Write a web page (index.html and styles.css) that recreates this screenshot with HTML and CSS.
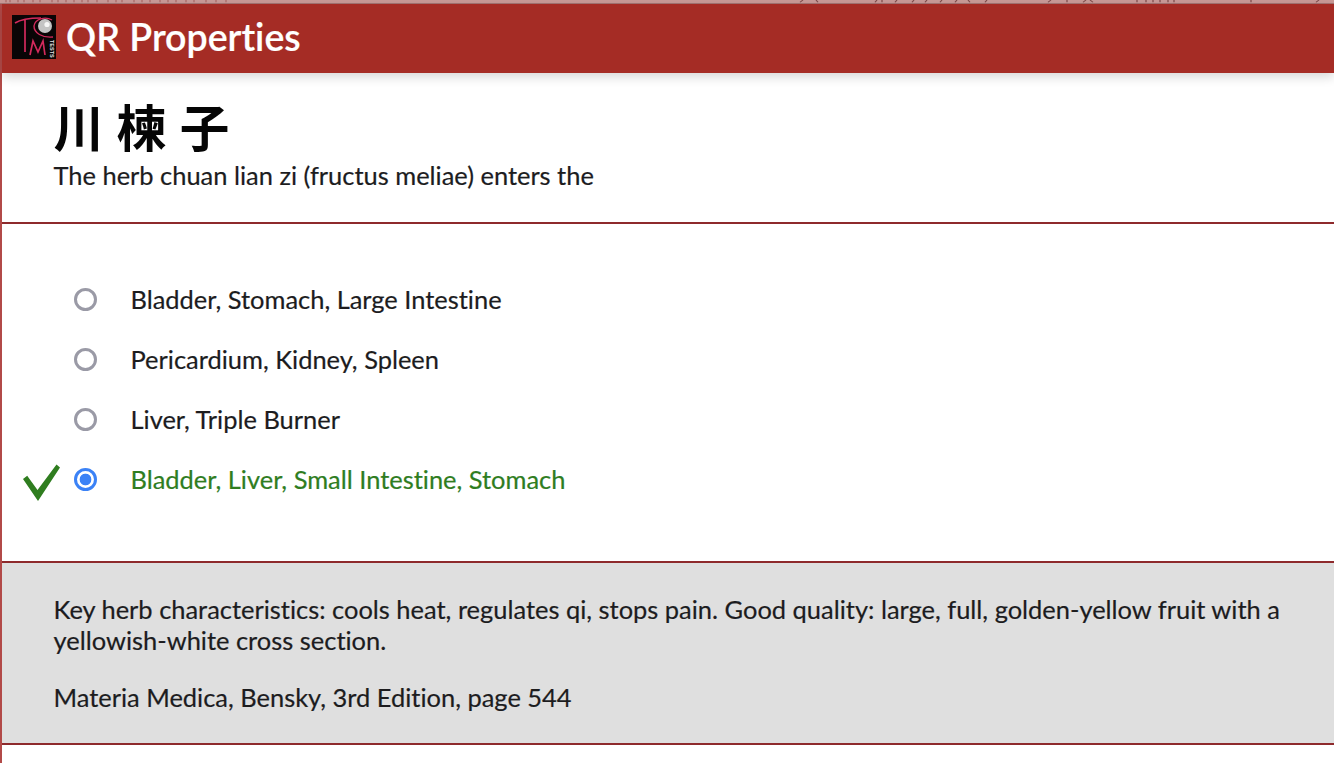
FILE: index.html
```html
<!DOCTYPE html>
<html lang="en">
<head>
<meta charset="utf-8">
<title>QR Properties</title>
<link rel="stylesheet" href="styles.css">
</head>
<body>
<div class="page">
  <svg class="peek" viewBox="0 0 1334 4" preserveAspectRatio="none" aria-hidden="true">
    <path class="peek-faint" d="M6 0V3M10 0V3M18 0V3M24 0V3M33 0V3M40 0V3M52 0V3M58 0V3M66 0V3M74 0V3M82 0V3M88 0V3M97 0V3M108 0V3M116 0V3M122 0V3M134 0V3M142 0V3M150 0V3M160 0V3M168 0V3M176 0V3M186 0V3M194 0V3M206 0V3M216 0V3M226 0V3"/>
    <path class="peek-dark" d="M800 3L803 0M816 0L818 3M875 3L877 0M882 0V3M895 3L897 0M912 3L914 0M925 3L927 0M940 3L942 0M955 3L957 0M968 0L970 3M985 3L987 0M1048 3L1051 0M1067 0V3M1083 3L1086 0M1090 0L1093 3M1137 0V3M1146 0V3M1153 0V3M1160 0V3M1168 0V3M1174 0V3M1251 0V3M1316 3L1319 0"/>
  </svg>
  <header class="bar">
    <svg class="logo" viewBox="0 0 44 44" aria-hidden="true">
      <rect width="44" height="44" fill="#0a0506"/>
      <circle cx="33" cy="11" r="7" fill="#c4c4c4"/>
      <circle cx="35" cy="9.5" r="2.6" fill="#f6f6f6"/>
      <path d="M3 8C9 4 20 3 29 3M13 4V37" fill="none" stroke="#d32a5c" stroke-width="1.7"/>
      <path d="M40 5C33 1 23 4 22 11C22 18 30 23 41 22" fill="none" stroke="#d32a5c" stroke-width="1.4"/>
      <path d="M18 40L21 26L26 37L31 26L33 40" fill="none" stroke="#d32a5c" stroke-width="1.7"/>
      <text x="0" y="0" class="logo-text" transform="translate(37.5 25) rotate(90)">TESTS</text>
    </svg>
    <h1 class="title">QR Properties</h1>
  </header>
  <section class="question">
    <div class="herb">川楝子</div>
    <p class="prompt">The herb chuan lian zi (fructus meliae) enters the</p>
  </section>
  <section class="answers">
    <label class="answer"><span class="mark"></span><input type="radio" name="q" class="radio"><span>Bladder, Stomach, Large Intestine</span></label>
    <label class="answer"><span class="mark"></span><input type="radio" name="q" class="radio"><span>Pericardium, Kidney, Spleen</span></label>
    <label class="answer"><span class="mark"></span><input type="radio" name="q" class="radio"><span>Liver, Triple Burner</span></label>
    <label class="answer correct"><span class="mark"><svg class="check" viewBox="0 0 38 38" aria-hidden="true"><path d="M1 15L5.200 11.800L15.500 26L34.500 0.500L38 3.500L16 37Z" fill="#2f7d1f"/></svg></span><input type="radio" name="q" class="radio" checked><span>Bladder, Liver, Small Intestine, Stomach</span></label>
  </section>
  <section class="notes">
    <p class="note">Key herb characteristics: cools heat, regulates qi, stops pain. Good quality: large, full, golden-yellow fruit with a yellowish-white cross section.</p>
    <p class="note">Materia Medica, Bensky, 3rd Edition, page 544</p>
  </section>
</div>
</body>
</html>
```
FILE: styles.css
```css
html, body {
  margin: 0;
  height: 100%;
  background: #fff;
  overflow: hidden;
}
.page {
  min-height: 763px;
  border-left: 2px solid #b24a48;
  box-sizing: border-box;
  font-family: Lato, "Noto Sans", sans-serif;
  font-size: 25.45px;
  font-variant-ligatures: none;
  color: #1c1c1e;
  -webkit-text-stroke: 0.2px currentColor;
}
.peek {
  display: block;
  width: calc(100% + 2px);
  height: 4px;
  margin-left: -2px;
  background: #c99a97;
  border-bottom: 1px solid #a47472;
  box-sizing: border-box;
}
.peek-faint {
  stroke: #b67c79;
  stroke-width: 2;
  fill: none;
}
.peek-dark {
  stroke: #7d4a49;
  stroke-width: 1.2;
  fill: none;
}
.bar {
  height: 69px;
  background: #a52c25;
  display: flex;
  align-items: center;
  gap: 10px;
  padding-left: 10px;
  box-shadow: 0 4px 10px rgba(0, 0, 0, .16);
  position: relative;
}
.logo {
  width: 44px;
  height: 44px;
  flex: none;
  margin-top: -3px;
}
.logo-text {
  font-family: "Liberation Sans", sans-serif;
  font-size: 5.500px;
  font-weight: 700;
  fill: #e6e6e6;
  stroke: none;
}
.title {
  margin: -3px 0 0;
  font-size: 37.500px;
  font-weight: 600;
  line-height: 1;
  color: #fff;
  -webkit-text-stroke: 0.2px #fff;
}
.question {
  height: 151px;
  padding: 25px 0 0 51.500px;
  box-sizing: border-box;
  border-bottom: 2px solid #8e2a2c;
}
.herb {
  font-family: "Noto Sans CJK TC", "Noto Sans CJK SC", sans-serif;
  font-weight: 700;
  font-size: 50px;
  line-height: 54px;
  letter-spacing: 13px;
  color: #050505;
  -webkit-text-stroke: 0;
}
.prompt {
  margin: 7px 0 0;
  line-height: 32px;
}
.answers {
  height: 339px;
  padding-top: 45px;
  box-sizing: border-box;
  border-bottom: 2px solid #8e2a2c;
  display: flex;
  flex-direction: column;
}
.answer {
  display: flex;
  align-items: center;
  height: 60px;
  flex: none;
}
.mark {
  width: 72px;
  flex: none;
  display: flex;
  padding-left: 20px;
  box-sizing: border-box;
}
.check {
  width: 38px;
  height: 38px;
  margin-top: 7px;
}
.radio {
  appearance: none;
  width: 23px;
  height: 23px;
  margin: 0 33.500px 0 0;
  flex: none;
  border: 3.500px solid #9a9aa6;
  border-radius: 50%;
  box-sizing: border-box;
  background: #fff;
}
.radio:checked {
  border-color: #3b82f6;
  background: radial-gradient(circle, #3b82f6 0 5.500px, #fff 6.200px);
}
.correct { color: #2f7d1f; }
.notes {
  height: 182px;
  box-sizing: border-box;
  padding: 31px 40px 0 51.500px;
  background: #dfdfdf;
  border-bottom: 2px solid #8e2a2c;
}
.note {
  margin: 0 0 26px;
  line-height: 31px;
}
```
